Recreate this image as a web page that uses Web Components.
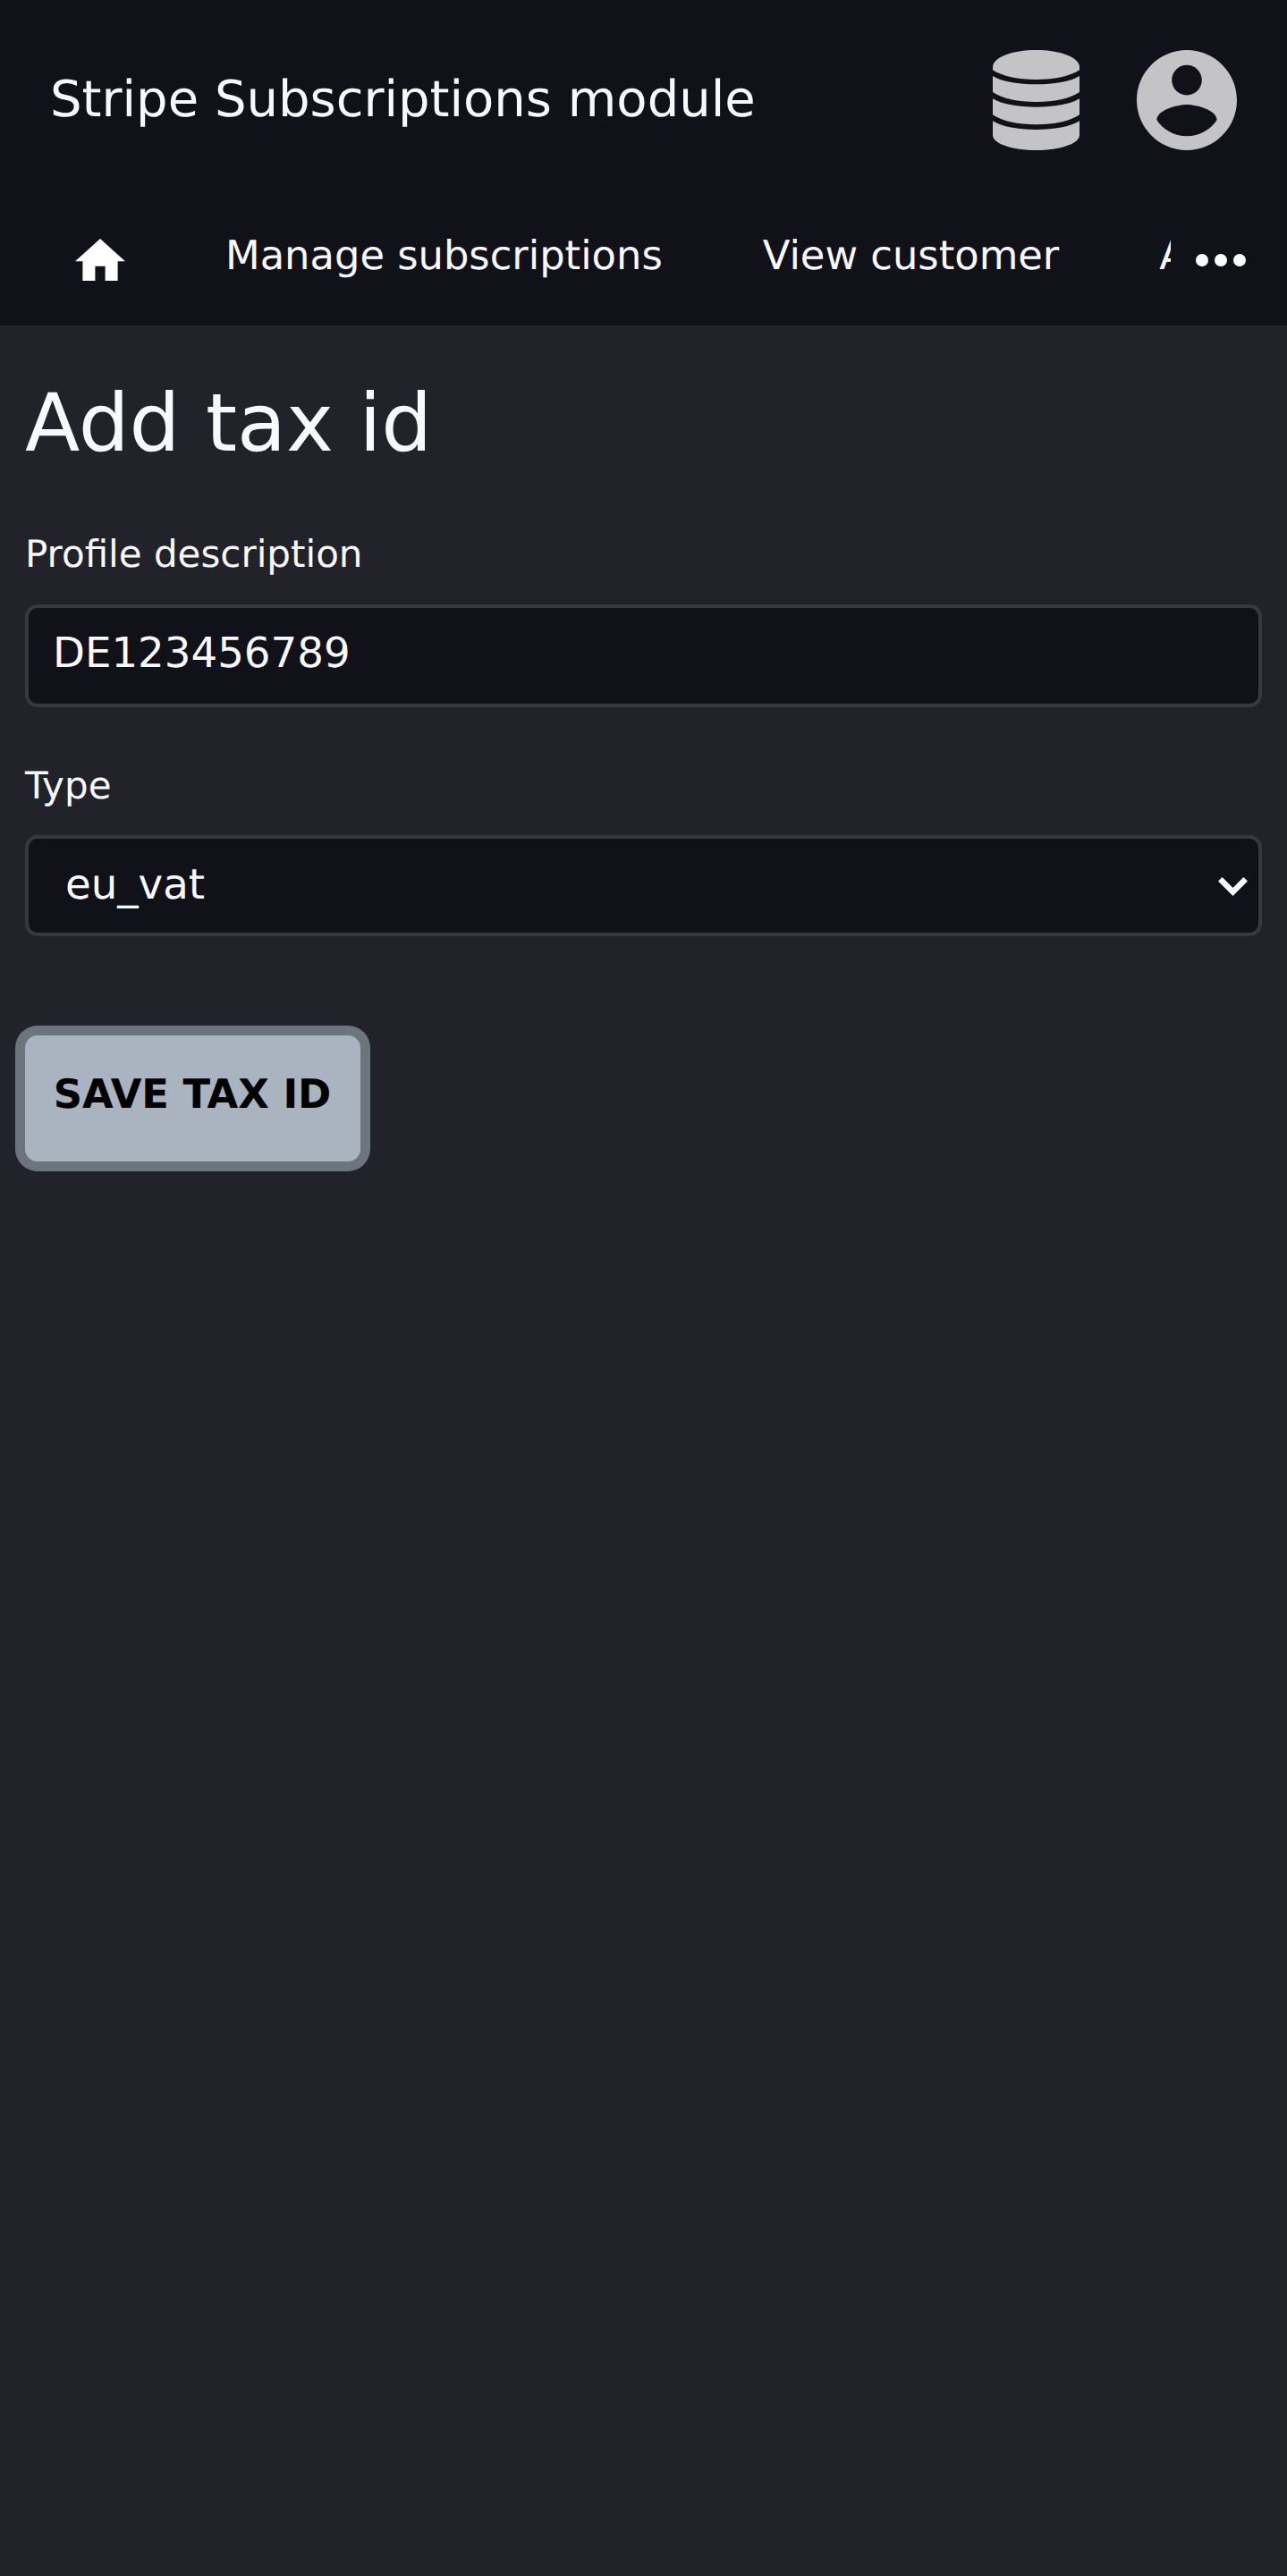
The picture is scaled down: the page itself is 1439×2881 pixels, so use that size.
<!DOCTYPE html>
<html lang="en">
<head>
<meta charset="utf-8">
<title>Stripe Subscriptions module</title>
<style>
html{background:#22222b}
body{margin:0;min-height:2881px;font-family:"DejaVu Sans",sans-serif;color:#f8f9fa;text-rendering:geometricPrecision;font-size:56px;line-height:1.5}
</style>
</head>
<body>
<app-header>Stripe Subscriptions module</app-header>
<nav-bar>
  <nav-item><home-icon></home-icon></nav-item>
  <nav-item>Manage subscriptions</nav-item>
  <nav-item>View customer</nav-item>
  <nav-item>A</nav-item>
</nav-bar>
<tax-form></tax-form>
<script>
const define=(name,html)=>customElements.define(name,class extends HTMLElement{
  constructor(){super();this.attachShadow({mode:'open'}).innerHTML=html;}
});
define('home-icon',`<style>:host{display:block;padding-top:14.500px}svg{display:block;width:56px;height:47.500px;fill:#fff}</style>
<svg viewBox="2 3 20 17" preserveAspectRatio="none"><path d="M10 20v-6h4v6h5v-8h3L12 3 2 12h3v8z"/></svg>`);
define('database-icon',`<style>:host{display:block}svg{display:block;width:97px;height:112px;fill:#c4c4c6}</style>
<svg viewBox="0 0 291 336" preserveAspectRatio="none"><path d="M0 57C0 24 65 0 145.500 0S291 24 291 57v10C260 88 205 99 145.500 99S31 88 0 67z"/><path d="M0 87c31 19 86 28 145.500 28S260 106 291 87v54c-31 22-86 33-145.500 33S31 163 0 141z"/><path d="M0 163c31 19 86 28 145.500 28S260 182 291 163v54c-31 22-86 33-145.500 33S31 239 0 217z"/><path d="M0 238c31 20 86 29 145.500 29S260 258 291 238v47c0 29-65 51-145.500 51S0 314 0 285z"/></svg>`);
define('account-icon',`<style>:host{display:block}svg{display:block;width:112px;height:112px;fill:#c4c4c6}</style>
<svg viewBox="2 2 20 20"><path d="M12 2C6.480 2 2 6.480 2 12s4.480 10 10 10 10-4.480 10-10S17.520 2 12 2zm0 3c1.660 0 3 1.340 3 3s-1.340 3-3 3-3-1.340-3-3 1.340-3 3-3zm0 14.200c-2.500 0-4.710-1.280-6-3.220.03-1.990 4-3.080 6-3.080 1.990 0 5.970 1.090 6 3.080-1.290 1.940-3.500 3.220-6 3.220z"/></svg>`);
define('app-header',`<style>:host{display:flex;align-items:center;justify-content:space-between;height:224px;box-sizing:border-box;padding:0 56.500px 0 56px;background:#11111a}
.title{padding-bottom:1px}.icons{display:flex;gap:64px}</style>
<div class="title"><slot></slot></div><div class="icons"><database-icon></database-icon><account-icon></account-icon></div>`);
define('nav-item',`<style>:host{display:block;flex:none;padding:0 56px;font-size:44.800px;line-height:68px;white-space:nowrap}</style><slot></slot>`);
define('nav-bar',`<style>:host{display:flex;height:140px;background:#11111a}
.items{display:flex;width:1281px;padding-left:28px;padding-top:28px;overflow:hidden;box-sizing:content-box;flex:none}
svg{display:block;width:84px;height:84px;fill:#fff;margin:25px 0 0 14px}</style>
<div class="items"><slot></slot></div>
<svg viewBox="0 0 24 24"><circle cx="6" cy="12" r="2"/><circle cx="12" cy="12" r="2"/><circle cx="18" cy="12" r="2"/></svg>`);
define('form-field',`<style>:host{display:block}
.label{display:block;font-size:42px;line-height:56px;margin-bottom:var(--label-gap,28px)}</style><label class="label"><slot name="label"></slot></label><slot></slot>`);
define('text-box',`<style>:host{display:block;box-sizing:border-box;height:115px;border:4px solid #343a40;border-radius:14px;background:#11111a;padding:0 27px;font-size:46.670px;line-height:103px}</style><slot></slot>`);
define('select-box',`<style>:host{display:flex;align-items:center;justify-content:space-between;box-sizing:border-box;height:113px;border:4px solid #343a40;border-radius:14px;background:#11111a;padding:0 12px 0 41px;font-size:46.670px;line-height:105px}
svg{display:block;width:33px;height:22px;margin-top:3px;fill:none;stroke:#f8f9fa;stroke-width:6.500}</style><span><slot></slot></span>
<svg viewBox="0 0 33 22"><path d="M2.300 2.300 16.500 16.500 30.700 2.300"/></svg>`);
define('save-button',`<style>:host{display:block;width:max-content}
button{display:block;border:0;font:bold 44.800px/67px "DejaVu Sans",sans-serif;text-rendering:geometricPrecision;color:#000;background:#a9b4c0;border-radius:14px;height:140.500px;width:375px;padding:0 1px 10px 0;box-shadow:0 0 0 11px #6c757d}</style><button><slot></slot></button>`);
define('tax-form',`<style>:host{display:block;padding:57px 28px 0}
h1{margin:0;font-weight:400;font-size:89.600px;line-height:107px}
.f1{margin-top:64px}.f2{margin-top:60px;--label-gap:27px}save-button{margin-top:111.300px}</style>
<h1>Add tax id</h1>
<form-field class="f1"><span slot="label">Profile description</span><text-box>DE123456789</text-box></form-field>
<form-field class="f2"><span slot="label">Type</span><select-box>eu_vat</select-box></form-field>
<save-button>SAVE TAX ID</save-button>`);
</script>
</body>
</html>
